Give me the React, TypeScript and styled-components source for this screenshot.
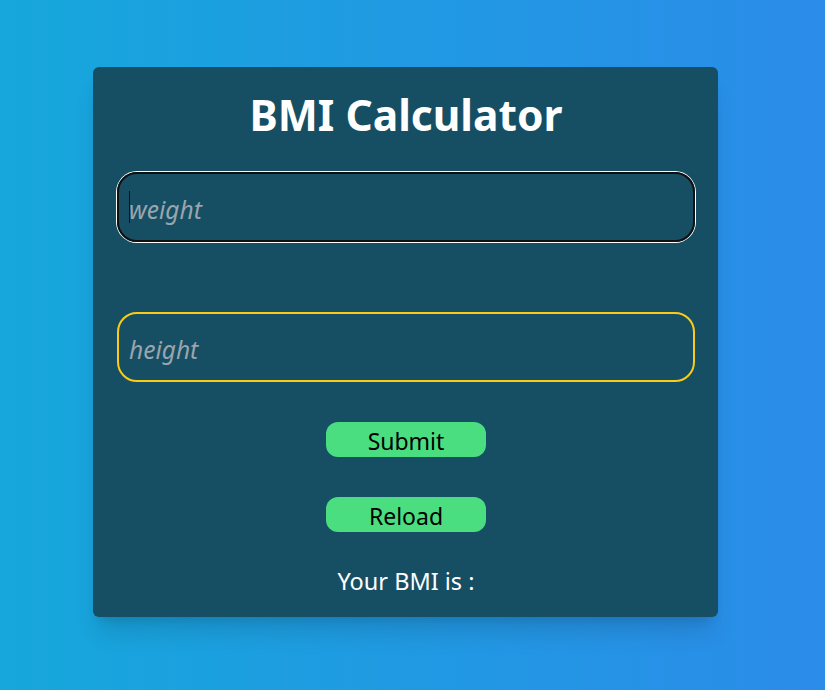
import React from "react";
import styled, { createGlobalStyle } from "styled-components";

const Global = createGlobalStyle`
  html, body { margin: 0; padding: 0; }
  body { font-family: "Noto Sans", "Open Sans", sans-serif; }
`;

const Page = styled.div`
  box-sizing: border-box;
  width: 100%;
  height: 690px;
  background: linear-gradient(90deg, #16a7dc 0%, #2b8ce9 100%);
  display: flex;
  justify-content: center;
  align-items: center;
  padding: 0 14px 6px 0;
`;

const Card = styled.form`
  box-sizing: border-box;
  width: 625px;
  height: 550px;
  background: #164f63;
  border-radius: 6px;
  box-shadow: 0 20px 25px -5px rgba(0, 0, 0, 0.12), 0 8px 10px -6px rgba(0, 0, 0, 0.12);
  padding: 13px 23px 0 24px;
  display: flex;
  flex-direction: column;
  align-items: center;
`;

const Title = styled.h1`
  margin: 0;
  color: #ffffff;
  font-size: 42.5px;
  font-weight: 700;
  line-height: 70px;
`;

const Field = styled.div<{ $gap: number }>`
  position: relative;
  width: 100%;
  margin-top: ${(p) => p.$gap}px;
`;

const Input = styled.input<{ $focused?: boolean }>`
  box-sizing: border-box;
  width: 100%;
  height: 70px;
  border-radius: 20px;
  border: 2px solid ${(p) => (p.$focused ? "#101010" : "#facc15")};
  box-shadow: ${(p) => (p.$focused ? "0 0 0 1px #ffffff" : "none")};
  background: transparent;
  outline: none;
  padding: 4px 10px 0;
  font-family: inherit;
  font-size: 24.5px;
  color: #ffffff;
  &::placeholder {
    color: #9aa5ae;
    font-style: italic;
  }
`;

const Caret = styled.span`
  position: absolute;
  left: 12px;
  top: 19px;
  width: 1px;
  height: 32px;
  background: #101010;
`;

const Button = styled.button<{ $gap: number }>`
  margin-top: ${(p) => p.$gap}px;
  width: 160px;
  height: 35px;
  border: none;
  border-radius: 12px;
  background: #4ade80;
  color: #000000;
  font-family: inherit;
  font-size: 23px;
  line-height: 35px;
  padding: 2px 0 0;
  cursor: pointer;
`;

const Result = styled.p`
  margin: 34px 0 0;
  color: #ffffff;
  font-size: 23.5px;
  line-height: 30px;
`;

export default function App() {
  return (
    <>
      <Global />
      <Page>
        <Card onSubmit={(e) => e.preventDefault()}>
          <Title>BMI Calculator</Title>
          <Field $gap={22}>
            <Input $focused placeholder="weight" />
            <Caret />
          </Field>
          <Field $gap={70}>
            <Input placeholder="height" />
          </Field>
          <Button type="submit" $gap={40}>Submit</Button>
          <Button type="button" $gap={40}>Reload</Button>
          <Result>Your BMI is :</Result>
        </Card>
      </Page>
    </>
  );
}
